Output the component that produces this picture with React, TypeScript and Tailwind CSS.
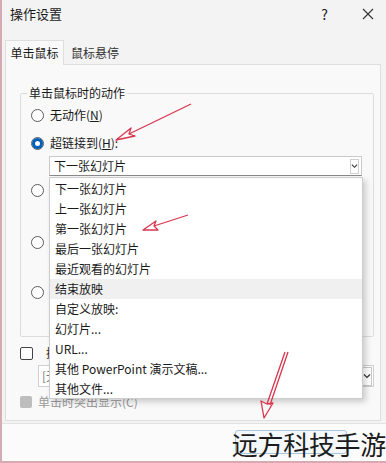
import React from 'react';

const font = { fontFamily: '"Noto Sans CJK SC", "Microsoft YaHei", sans-serif' };

const Radio = ({ checked = false }: { checked?: boolean }) => (
    <span className="w-[13px] h-[13px] rounded-full border border-[#5c5c5c] bg-white flex items-center justify-center shrink-0">
        {checked && <span className="w-[11px] h-[11px] rounded-full bg-[#005fb8] flex items-center justify-center">
            <span className="w-[5px] h-[5px] rounded-full bg-white" />
        </span>}
    </span>
);

const Chevron = () => (
    <svg width="8" height="6" viewBox="0 0 8 6">
        <path d="M1 1.5 L4 4.5 L7 1.5" fill="none" stroke="#333" strokeWidth="1.2" />
    </svg>
);

const items = [
    '下一张幻灯片',
    '上一张幻灯片',
    '第一张幻灯片',
    '最后一张幻灯片',
    '最近观看的幻灯片',
    '结束放映',
    '自定义放映:',
    '幻灯片...',
    'URL...',
    '其他 PowerPoint 演示文稿...',
    '其他文件...',
];

const App = () => {
    return (
        <div
            className="relative w-[386px] h-[463px] overflow-hidden bg-[#f3f3f3] border-l-2 border-b-2 border-[#d6aab3] text-[12px] text-[#1a1a1a]"
            style={font}
        >
            {/* title bar */}
            <div className="h-[28px] flex items-center pl-[8px] pr-[12px]">
                <span className="text-[13px]">操作设置</span>
                <span className="ml-auto mr-[34px] text-[14px]">?</span>
                <svg width="12" height="12" viewBox="0 0 12 12">
                    <path d="M1 1 L11 11 M11 1 L1 11" stroke="#333" strokeWidth="1.1" />
                </svg>
            </div>

            {/* tabs */}
            <div className="mt-[11px] ml-[3px] flex items-end h-[25px]">
                <div className="h-[25px] w-[59px] flex items-center justify-center bg-[#f9f9f9] border border-b-0 border-[#dedede] relative z-10 -mb-px">
                    单击鼠标
                </div>
                <div className="h-[22px] w-[62px] flex items-center justify-center bg-[#f3f3f3] text-[#333]">
                    鼠标悬停
                </div>
            </div>

            {/* panel */}
            <div className="mx-[3px] w-[376px] h-[357px] bg-[#f9f9f9] border border-[#dedede] pt-[15px] pl-[14px]">
                <div className="relative w-[354px] h-[244px] border border-[#dcdcdc] rounded-[2px] mt-[13px]">
                    <span className="absolute -top-[9px] left-[6px] px-[2px] bg-[#f9f9f9] leading-[16px]">单击鼠标时的动作</span>
                    <div className="pl-[10px] pt-[13px] flex flex-col">
                        <div className="flex items-center gap-[6px] h-[16px]">
                            <Radio />
                            <span>无动作(<span className="underline">N</span>)</span>
                        </div>
                        <div className="flex items-center gap-[6px] h-[16px] mt-[12px]">
                            <Radio checked />
                            <span>超链接到(<span className="underline">H</span>):</span>
                        </div>
                        <div className="mt-[5px] ml-[18px] w-[313px] h-[20px] bg-white border border-[#c9c9c9] border-b-[#8a8a8a] flex items-center pl-[4px] pr-[2px]">
                            <span>下一张幻灯片</span>
                            <span className="ml-auto w-[9px] h-[15px] border border-[#d0d0d0] flex items-center justify-center"><Chevron /></span>
                        </div>
                        <div className="flex items-center h-[16px] mt-[6px]"><Radio /></div>
                        <div className="flex items-center h-[16px] mt-[36px]"><Radio /></div>
                        <div className="flex items-center h-[16px] mt-[34px]"><Radio /></div>
                    </div>
                </div>

                <div className="flex items-center gap-[13px] h-[14px] mt-[9px]">
                    <span className="w-[13px] h-[13px] border border-[#444] bg-white rounded-[2px]" />
                    <span>播放声音(P):</span>
                </div>
                <div className="ml-[18px] mt-[5px] w-[336px] h-[22px] bg-white border border-[#cfcfcf] flex items-center pl-[3px] pr-[1px] text-[#777]">
                    <span>[无声音]</span>
                    <span className="ml-auto w-[11px] h-[19px] border border-[#c7c7c7] flex items-center justify-center"><Chevron /></span>
                </div>
                <div className="flex items-center gap-[6px] h-[14px] mt-[8px] text-[#9a9a9a]">
                    <span className="w-[12px] h-[12px] bg-[#bdbdbd] rounded-[2px]" />
                    <span>单击时突出显示(C)</span>
                </div>
            </div>

            {/* bottom strip */}
            <div className="mt-[2px] h-[40px] bg-[#fbfbfb] border-t border-[#e2e2e2] flex items-center justify-end relative">
                <div className="absolute left-[233px] top-[6px] w-[112px] h-[24px] border border-[#a9c6de] rounded-[3px] bg-[#f4f8fb]" />
                <span className="relative text-[26px] leading-[30px] text-[#1c1c1c] tracking-[-0.3px]">远方科技手游</span>
            </div>

            {/* dropdown list */}
            <div className="absolute left-[47px] top-[177px] w-[314px] h-[222px] bg-white border border-[#cccccc] shadow-[3px_3px_6px_rgba(0,0,0,0.18)] pt-px">
                {items.map((t) => (
                    <div
                        key={t}
                        className={`h-[20px] flex items-center pl-[5px] ${t === '结束放映' ? 'bg-[#f0f0f0]' : ''}`}
                    >
                        {t}
                    </div>
                ))}
            </div>

            {/* red annotation arrows */}
            <svg className="absolute inset-0 pointer-events-none" width="386" height="463" viewBox="0 0 386 463">
                <g fill="none" stroke="#d9364f" strokeWidth="1.3" strokeLinejoin="round">
                    <path d="M189 104 L127 134" />
                    <path d="M114 140 L129 128 L127 134 L133 136 Z" />
                    <path d="M186 215 L152 226" />
                    <path d="M141 230 L154 221 L152 226 L156 230 Z" />
                    <path d="M286 352 L268 405 M283 352 L265 404" />
                    <path d="M262 418 L259 401 L265 404 L271 403 Z" />
                </g>
            </svg>
        </div>
    );
};

export default App;
